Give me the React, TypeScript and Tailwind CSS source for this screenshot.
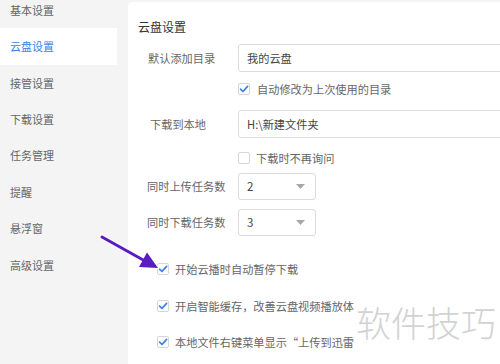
import React from "react";

const font = { fontFamily: '"Noto Sans CJK SC", "Noto Sans", sans-serif' };

function Check({ checked }: { checked: boolean }) {
  return (
    <div className="w-[12px] h-[12px] shrink-0 rounded-[2px] border border-[#d6d6d6] bg-white flex items-center justify-center">
      {checked && (
        <svg width="10" height="10" viewBox="0 0 10 10">
          <path d="M1.6 5.2 L4 7.5 L8.6 2.4" fill="none" stroke="#3a84e6" strokeWidth="1.7" strokeLinecap="round" strokeLinejoin="round" />
        </svg>
      )}
    </div>
  );
}

function Select({ value }: { value: string }) {
  return (
    <div className="w-[78px] h-[27px] shrink-0 border border-[#dcdcdc] rounded-[3px] flex items-center justify-between pl-[8px] pr-[10px] text-[11.5px] text-[#444]">
      <span>{value}</span>
      <svg width="9" height="5" viewBox="0 0 9 5">
        <path d="M0 0 L9 0 L4.5 5 Z" fill="#a8a8a8" />
      </svg>
    </div>
  );
}

export default function App() {
  const nav = ["基本设置", "云盘设置", "接管设置", "下载设置", "任务管理", "提醒", "悬浮窗", "高级设置"];
  return (
    <div className="relative w-[500px] h-[364px] overflow-hidden bg-[#f4f4f4] flex" style={font}>
      <div className="w-[117px] shrink-0 flex flex-col -mt-[8.25px]">
        {nav.map((n, i) => (
          <div
            key={n}
            className={
              "h-[36.43px] shrink-0 flex items-center pl-[10px] text-[11px] " +
              (i === 1 ? "bg-white text-[#3a84e6]" : "text-[#666]")
            }
          >
            {n}
          </div>
        ))}
      </div>
      <div className="ml-[11px] mt-[2px] flex-1 min-w-0 bg-white rounded-tl-[4px] overflow-hidden flex flex-col pt-[16px]">
        <div className="pl-[10px] h-[18px] leading-[18px] text-[12px] text-[#333]">云盘设置</div>
        <div className="mt-[8px] flex items-center pl-[20px]">
          <div className="w-[90px] shrink-0 text-[11.2px] text-[#666]">默认添加目录</div>
          <div className="w-[300px] shrink-0 h-[28px] border border-[#dcdcdc] rounded-[3px] flex items-center pl-[8px] text-[11.2px] text-[#444]">我的云盘</div>
        </div>
        <div className="mt-[7px] h-[20px] flex items-center pl-[110px] gap-[7px] text-[11.2px] text-[#666]">
          <Check checked />
          <span className="whitespace-nowrap">自动修改为上次使用的目录</span>
        </div>
        <div className="mt-[11px] flex items-center pl-[20px]">
          <div className="w-[90px] shrink-0 text-[11.2px] text-[#666] pl-[2px]">下载到本地</div>
          <div className="w-[300px] shrink-0 h-[28px] border border-[#dcdcdc] rounded-[3px] flex items-center pl-[8px] text-[11.2px] text-[#444]">H:\新建文件夹</div>
        </div>
        <div className="mt-[10px] h-[20px] flex items-center pl-[110px] gap-[6px] text-[11.2px] text-[#666]">
          <Check checked={false} />
          <span className="whitespace-nowrap">下载时不再询问</span>
        </div>
        <div className="mt-[5px] flex items-center pl-[19px]">
          <div className="w-[91px] shrink-0 text-[11.2px] text-[#666]">同时上传任务数</div>
          <Select value="2" />
        </div>
        <div className="mt-[9px] flex items-center pl-[19px]">
          <div className="w-[91px] shrink-0 text-[11.2px] text-[#666]">同时下载任务数</div>
          <Select value="3" />
        </div>
        <div className="mt-[23px] h-[20px] flex items-center pl-[29px] gap-[6px] text-[11.2px] text-[#666]">
          <Check checked />
          <span className="w-[179px] overflow-hidden whitespace-nowrap">开始云播时自动暂停下载</span>
        </div>
        <div className="mt-[17px] h-[20px] flex items-center pl-[29px] gap-[6px] text-[11.2px] text-[#666]">
          <Check checked />
          <span className="w-[179px] overflow-hidden whitespace-nowrap">开启智能缓存，改善云盘视频播放体验</span>
        </div>
        <div className="mt-[16px] h-[20px] flex items-center pl-[29px] gap-[6px] text-[11.2px] text-[#666]">
          <Check checked />
          <span className="w-[179px] overflow-hidden whitespace-nowrap">本地文件右键菜单显示“上传到迅雷云盘”</span>
        </div>
      </div>

      <div className="absolute left-[356px] top-[298px] text-[35px] leading-[48px] font-light text-[#d2d2d2] whitespace-nowrap pointer-events-none">
        软件技巧
      </div>

      <svg className="absolute left-0 top-0 pointer-events-none" width="500" height="364" viewBox="0 0 500 364">
        <line x1="102" y1="237" x2="145" y2="261" stroke="#ffffff" strokeWidth="5.5" strokeLinecap="round" opacity="0.8" />
        <path d="M158 268 L139 267 L147 252.5 Z" fill="#ffffff" stroke="#ffffff" strokeWidth="2.5" strokeLinejoin="round" opacity="0.8" />
        <line x1="102" y1="237" x2="145" y2="261" stroke="#5a1cc0" strokeWidth="3" strokeLinecap="round" />
        <path d="M158 268 L139 267 L147 252.5 Z" fill="#5a1cc0" />
      </svg>
    </div>
  );
}
